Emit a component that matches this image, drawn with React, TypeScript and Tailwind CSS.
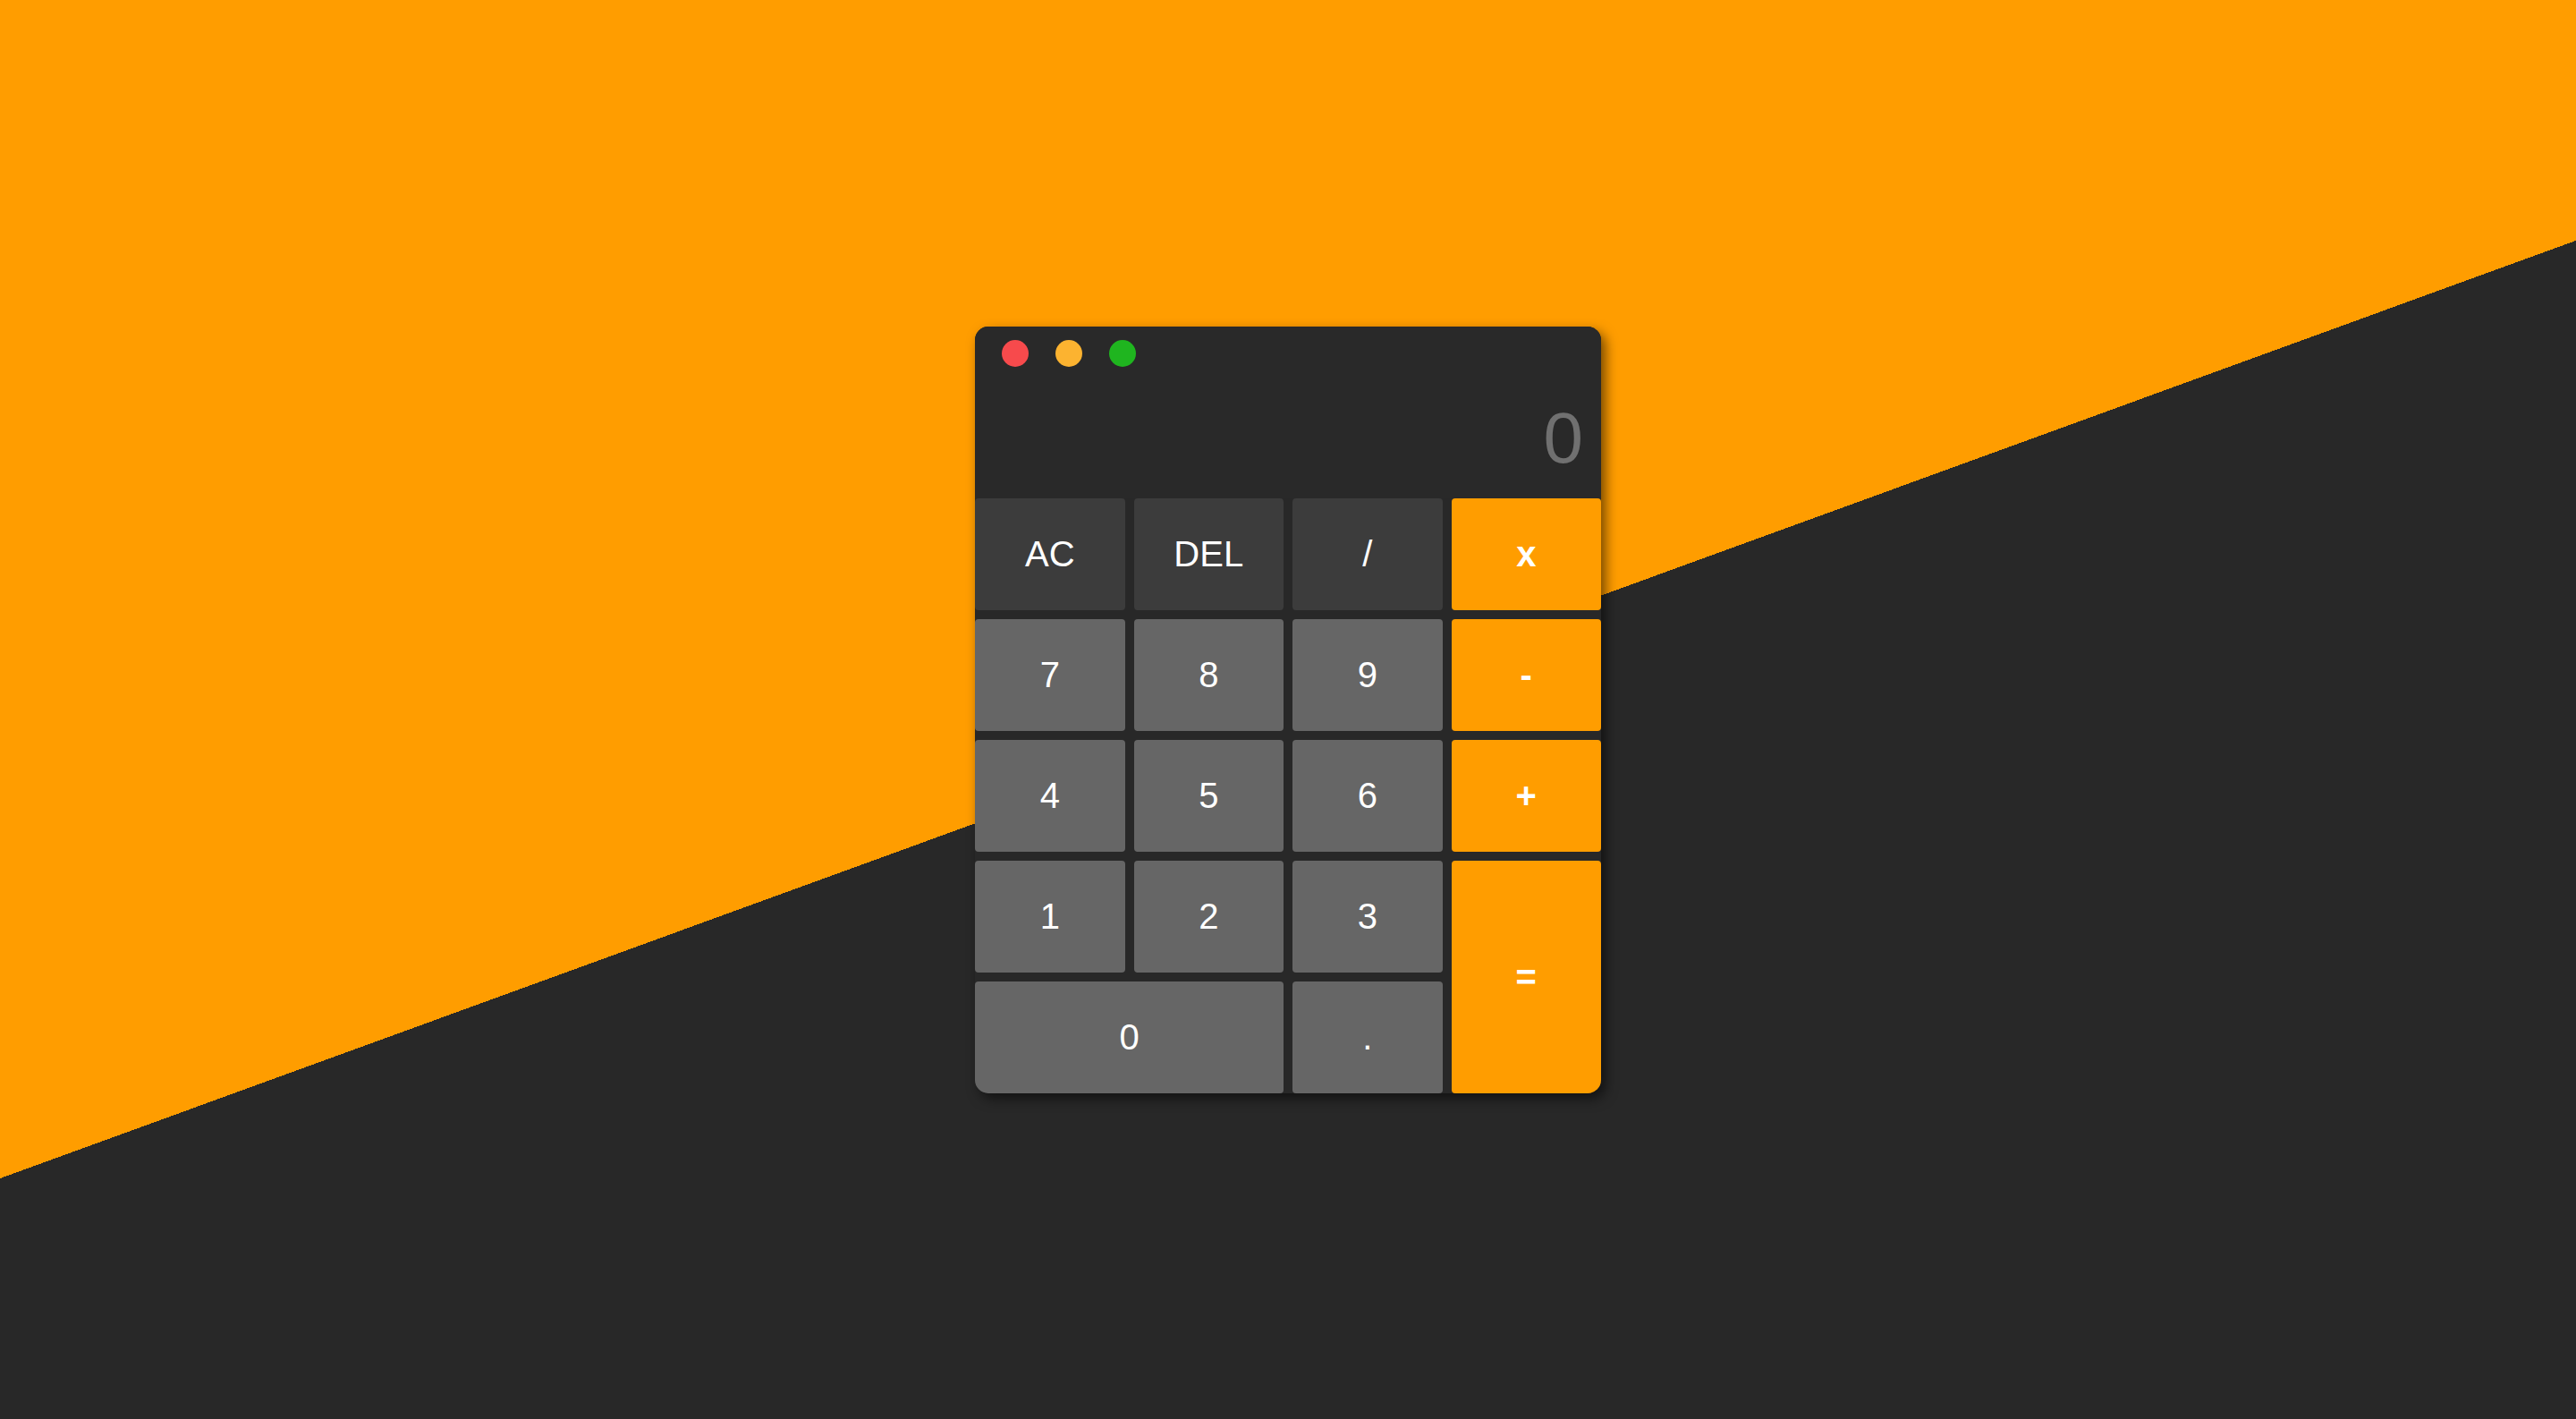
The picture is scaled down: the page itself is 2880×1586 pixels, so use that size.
import React from 'react';

type Key = {
  label: string;
  kind: 'fn' | 'num' | 'op';
  className?: string;
};

const keys: Key[] = [
  { label: 'AC', kind: 'fn' },
  { label: 'DEL', kind: 'fn' },
  { label: '/', kind: 'fn' },
  { label: 'x', kind: 'op' },
  { label: '7', kind: 'num' },
  { label: '8', kind: 'num' },
  { label: '9', kind: 'num' },
  { label: '-', kind: 'op' },
  { label: '4', kind: 'num' },
  { label: '5', kind: 'num' },
  { label: '6', kind: 'num' },
  { label: '+', kind: 'op' },
  { label: '1', kind: 'num' },
  { label: '2', kind: 'num' },
  { label: '3', kind: 'num' },
  { label: '=', kind: 'op', className: 'row-span-2' },
  { label: '0', kind: 'num', className: 'col-span-2' },
  { label: '.', kind: 'num' },
];

const kindStyles: Record<Key['kind'], string> = {
  fn: 'bg-[#3c3c3c] font-normal',
  num: 'bg-[#666666] font-normal',
  op: 'bg-[#ff9d00] font-bold',
};

function CalcKey({ item }: { item: Key }) {
  return (
    <button
      className={`${kindStyles[item.kind]} ${item.className ?? ''} flex items-center justify-center rounded-[4px] text-[40px] leading-none text-white`}
    >
      {item.label}
    </button>
  );
}

export default function App() {
  return (
    <div className="flex h-screen w-full items-center justify-center bg-[linear-gradient(160deg,#ff9d00_50%,#282828_50%)] font-['Liberation_Sans',Arial,sans-serif]">
      <div className="flex w-[700px] flex-col overflow-hidden rounded-[15px] bg-[#282828] shadow-[5px_6px_14px_rgba(0,0,0,0.55)]">
        <div className="flex h-[192px] flex-col bg-[#292929]">
          <div className="flex gap-[30px] pl-[30px] pt-[15px]">
            <span className="h-[30px] w-[30px] rounded-full bg-[#f74a4c]" />
            <span className="h-[30px] w-[30px] rounded-full bg-[#fcb330]" />
            <span className="h-[30px] w-[30px] rounded-full bg-[#1fb51f]" />
          </div>
          <div className="flex flex-1 items-end justify-end pb-[27px] pr-[20px] text-[80px] leading-none text-[#707070]">
            0
          </div>
        </div>
        <div className="grid grid-cols-4 auto-rows-[125px] gap-[10px]">
          {keys.map(k => (
            <CalcKey key={k.label} item={k} />
          ))}
        </div>
      </div>
    </div>
  );
}
